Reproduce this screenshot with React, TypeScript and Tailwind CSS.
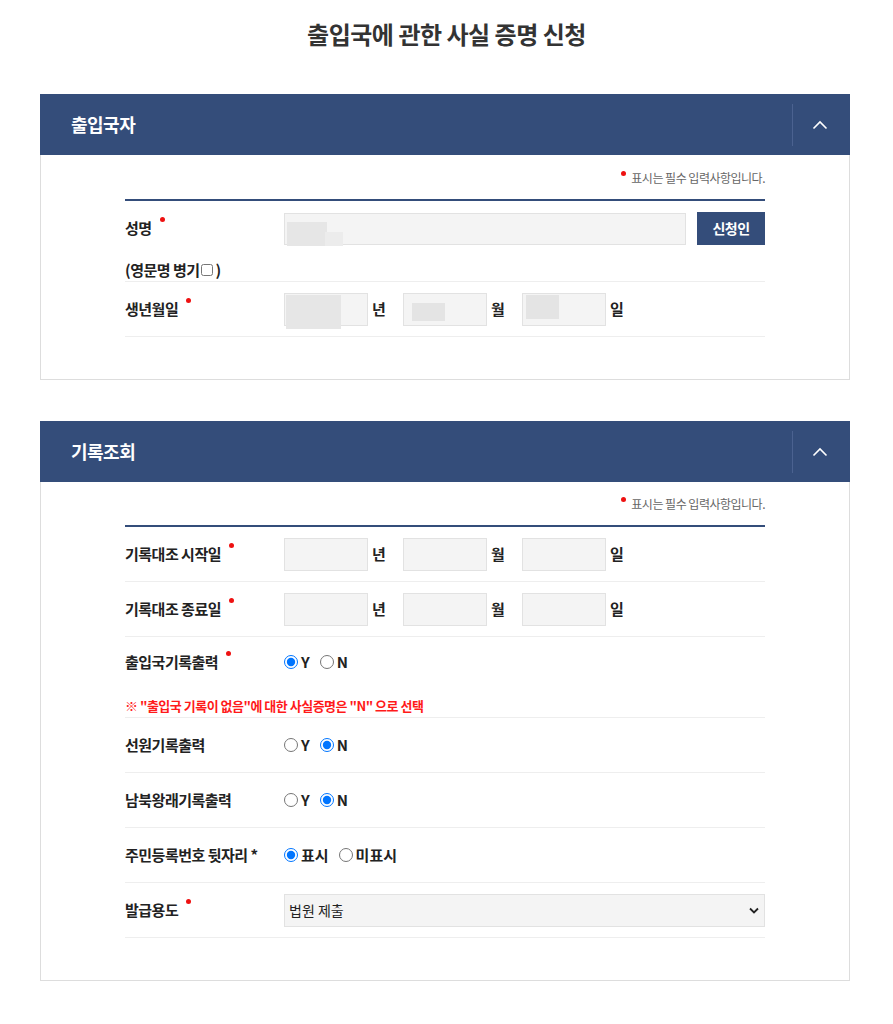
import React from 'react';

// 출입국에 관한 사실 증명 신청 화면

const FONT = { fontFamily: '"Noto Sans CJK KR", "Noto Sans", "Liberation Sans", sans-serif' };

const Dot: React.FC = () => (
  <span className="inline-block w-[5px] h-[5px] rounded-full bg-[#ee1111] ml-[8px] relative -top-[12px]" />
);

const RequiredNote: React.FC = () => (
  <div className="flex justify-end items-center h-[18px] text-[12px] text-[#666] tracking-[-0.5px]">
    <span className="inline-block w-[5px] h-[5px] rounded-full bg-[#ee1111] mr-[5px] relative -top-[5px]" />
    표시는 필수 입력사항입니다.
  </div>
);

const SectionHeader: React.FC<{ title: string }> = ({ title }) => (
  <div className="flex items-center h-[61px] bg-[#344d7a]">
    <h2 className="flex-1 pl-[31px] text-[18px] font-bold text-white tracking-[-0.5px]">{title}</h2>
    <div className="w-px h-[42px] bg-[#4b6290]" />
    <div className="w-[57px] flex justify-center pr-[3px]">
      <svg width="16" height="10" viewBox="0 0 16 10" fill="none">
        <path d="M1.5 8.5 L8 2 L14.5 8.5" stroke="white" strokeWidth="1.6" />
      </svg>
    </div>
  </div>
);

const Label: React.FC<{ text: string; required?: boolean }> = ({ text, required }) => (
  <div className="w-[159px] shrink-0 text-[15px] font-bold text-[#222] tracking-[-0.5px]">
    {text}
    {required && <Dot />}
  </div>
);

// 입력칸 (마스킹 블록 포함)
const Box: React.FC<{ w: string; mask?: React.ReactNode }> = ({ w, mask }) => (
  <div className={`relative h-[33px] ${w} bg-[#f4f4f4] border border-[#e2e2e2]`}>
    {mask}
  </div>
);

const DateInputs: React.FC<{ masked?: boolean }> = ({ masked }) => (
  <div className="flex items-center text-[15px] font-bold text-[#222]">
    <Box
      w="w-[84px]"
      mask={masked && <div className="absolute left-[1px] top-[1px] w-[55px] h-[34px] bg-[#e6e6e6]" />}
    />
    <span className="ml-[4px] w-[31px]">년</span>
    <Box
      w="w-[84px]"
      mask={masked && <div className="absolute left-[8px] top-[9px] w-[33px] h-[18px] bg-[#e4e4e4]" />}
    />
    <span className="ml-[4px] w-[31px]">월</span>
    <Box
      w="w-[84px]"
      mask={masked && <div className="absolute left-[3px] top-[1px] w-[33px] h-[24px] bg-[#e4e4e4]" />}
    />
    <span className="ml-[4px]">일</span>
  </div>
);

const Radio: React.FC<{ name: string; options: string[]; checked: string }> = ({ name, options, checked }) => (
  <div className="flex items-center gap-[10px] text-[15px] font-bold text-[#222]">
    {options.map(opt => (
      <label key={opt} className="flex items-center">
        <input
          type="radio"
          name={name}
          defaultChecked={opt === checked}
          className="w-[14px] h-[14px] m-0 mr-[3px] accent-[#0075ff]"
        />
        {opt}
      </label>
    ))}
  </div>
);

const Row: React.FC<{ children: React.ReactNode }> = ({ children }) => (
  <div className="flex items-center h-[55px] border-b border-[#eeeeee]">{children}</div>
);

const App: React.FC = () => {
  return (
    <div className="bg-white min-h-[1024px] pb-[40px]" style={FONT}>
      <h1 className="pt-[16px] h-[54px] text-center text-[24px] font-bold text-[#333] tracking-[-0.5px]">
        출입국에 관한 사실 증명 신청
      </h1>

      {/* 출입국자 */}
      <section className="w-[810px] ml-[40px] mt-[40px]">
        <SectionHeader title="출입국자" />
        <div className="border border-t-0 border-[#dddddd] px-[84px] pt-[14px] pb-[42px]">
          <RequiredNote />
          <div className="mt-[12px] h-[2px] bg-[#344d7a]" />

          <div className="border-b border-[#eeeeee] pt-[11px]">
            <div className="flex items-center">
              <Label text="성명" required />
              <div className="relative flex-1 h-[32px] bg-[#f4f4f4] border border-[#e2e2e2]">
                <div className="absolute left-[2px] top-[8px] w-[40px] h-[24px] bg-[#e6e6e6]" />
                <div className="absolute left-[40px] top-[18px] w-[18px] h-[14px] bg-[#ececec]" />
              </div>
              <button className="ml-[11px] w-[68px] h-[33px] bg-[#344d7a] text-white text-[14px] font-bold tracking-[-0.5px]">
                신청인
              </button>
            </div>
            <div className="mt-[14px] h-[22px] flex items-center text-[15px] font-bold text-[#222] tracking-[-0.5px]">
              (영문명 병기
              <input type="checkbox" className="w-[12px] h-[12px] m-0 ml-[1px] mr-[3px] accent-[#0075ff]" />
              )
            </div>
          </div>

          <Row>
            <Label text="생년월일" required />
            <DateInputs masked />
          </Row>
        </div>
      </section>

      {/* 기록조회 */}
      <section className="w-[810px] ml-[40px] mt-[41px]">
        <SectionHeader title="기록조회" />
        <div className="border border-t-0 border-[#dddddd] px-[84px] pt-[13px] pb-[42px]">
          <RequiredNote />
          <div className="mt-[12px] h-[2px] bg-[#344d7a]" />

          <Row>
            <Label text="기록대조 시작일" required />
            <DateInputs />
          </Row>
          <Row>
            <Label text="기록대조 종료일" required />
            <DateInputs />
          </Row>

          <div className="border-b border-[#eeeeee] pt-[13px] pb-[1px]">
            <div className="flex items-center h-[24px]">
              <Label text="출입국기록출력" required />
              <Radio name="inout" options={['Y', 'N']} checked="Y" />
            </div>
            <p className="mt-[22px] h-[20px] text-[13px] font-bold text-[#ff1a1a] tracking-[-0.5px]">
              ※ "출입국 기록이 없음"에 대한 사실증명은 "N" 으로 선택
            </p>
          </div>

          <Row>
            <Label text="선원기록출력" />
            <Radio name="seaman" options={['Y', 'N']} checked="N" />
          </Row>
          <Row>
            <Label text="남북왕래기록출력" />
            <Radio name="nk" options={['Y', 'N']} checked="N" />
          </Row>
          <Row>
            <Label text="주민등록번호 뒷자리 *" />
            <Radio name="rrn" options={['표시', '미표시']} checked="표시" />
          </Row>
          <Row>
            <Label text="발급용도" required />
            <div className="relative flex-1">
              <select
                defaultValue="court"
                className="w-full h-[33px] appearance-none bg-[#f4f4f4] border border-[#e2e2e2] pl-[4px] text-[14px] text-[#222] outline-none"
              >
                <option value="court">법원 제출</option>
                <option value="etc">기타</option>
              </select>
              <svg
                className="absolute right-[6px] top-[13px] pointer-events-none"
                width="10" height="7" viewBox="0 0 10 7" fill="none"
              >
                <path d="M1 1.5 L5 5.5 L9 1.5" stroke="#222" strokeWidth="1.8" />
              </svg>
            </div>
          </Row>
        </div>
      </section>
    </div>
  );
};

export default App;
